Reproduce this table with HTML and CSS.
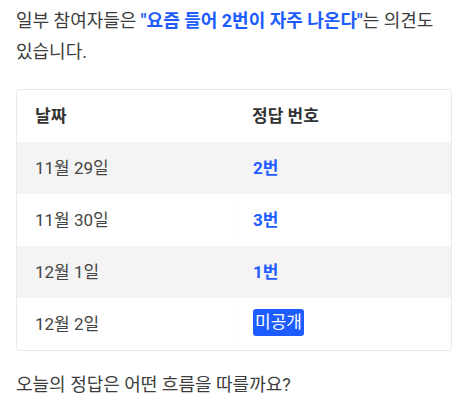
FILE: index.html
```html
<!DOCTYPE html>
<html lang="ko">
<head>
<meta charset="utf-8">
<link rel="stylesheet" href="styles.css">
</head>
<body>
<div class="page">
  <p class="para">일부 참여자들은 <strong class="hl">"요즘 들어 2번이 자주 나온다"</strong>는 의견도 있습니다.</p>
  <table class="answers">
    <thead>
      <tr><th>날짜</th><th>정답 번호</th></tr>
    </thead>
    <tbody>
      <tr class="alt"><td>11월 29일</td><td><strong class="hl">2번</strong></td></tr>
      <tr><td>11월 30일</td><td><strong class="hl">3번</strong></td></tr>
      <tr class="alt"><td>12월 1일</td><td><strong class="hl">1번</strong></td></tr>
      <tr><td>12월 2일</td><td><span class="badge">미공개</span></td></tr>
    </tbody>
  </table>
  <p class="para last">오늘의 정답은 어떤 흐름을 따를까요?</p>
</div>
</body>
</html>
```
FILE: styles.css
```css
html, body {
  margin: 0;
  padding: 0;
  background: #fff;
}
body {
  font-family: Roboto, "Noto Sans CJK KR", sans-serif;
  color: #3a3a3a;
}
.page {
  padding: 5px 14px 0 16px;
}
.para {
  margin: 0;
  font-size: 18px;
  line-height: 31px;
  color: #3c3c3c;
  word-break: keep-all;
}
.hl {
  color: #1d5cff;
  font-weight: 700;
}
.answers {
  width: 100%;
  margin: 22px 0 18px;
  border-collapse: separate;
  border-spacing: 0;
  border: 1px solid #e9e9e9;
  border-radius: 3px;
  table-layout: fixed;
  font-size: 17px;
}
.answers th,
.answers td {
  height: 52px;
  padding: 0 18px 3px;
  text-align: left;
  vertical-align: middle;
  box-sizing: border-box;
}
.answers th {
  font-weight: 700;
  color: #333;
}
.answers td {
  color: #444;
}
.answers td + td {
  border-left: 1px solid #fafafa;
}
.answers tr.alt td {
  background: #f4f4f4;
}
.badge {
  display: inline-block;
  background: #1d5cff;
  color: #fff;
  padding: 2px 2px;
  border-radius: 3px;
  line-height: 23px;
}
.last {
  margin-top: 0;
}
```
